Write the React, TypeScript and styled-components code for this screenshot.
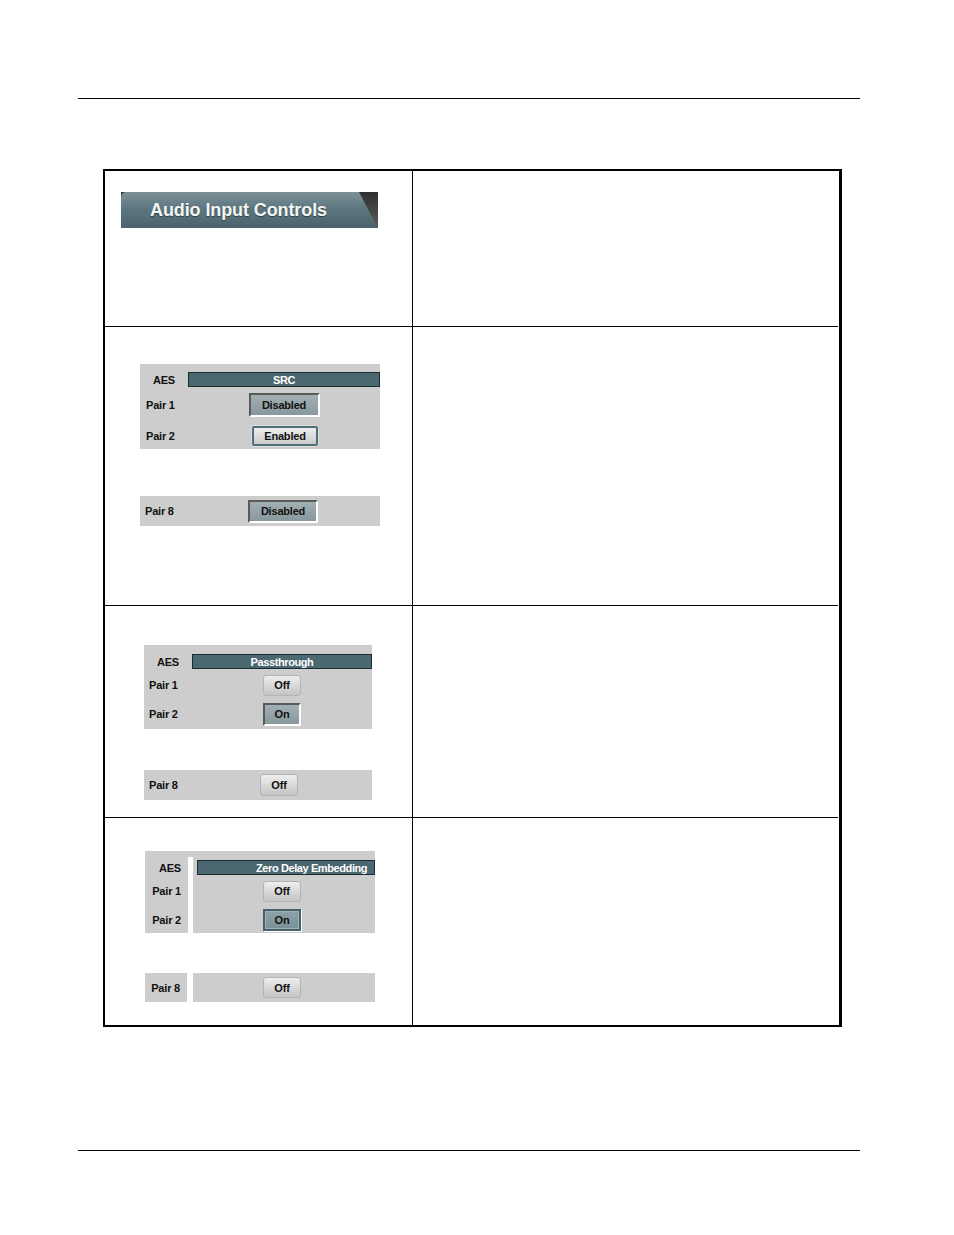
import styled, { createGlobalStyle, css } from "styled-components";

const GlobalStyle = createGlobalStyle`
  html, body {
    margin: 0;
    padding: 0;
    background: #ffffff;
  }
  body {
    font-family: "Liberation Sans", Arial, sans-serif;
  }
`;

const Page = styled.div`
  width: 954px;
  min-height: 1235px;
  padding-top: 98px;
  box-sizing: border-box;
`;

const Rule = styled.div<{ $top: number }>`
  margin: ${({ $top }) => $top}px 0 0 78px;
  width: 782px;
  height: 1px;
  background: #000;
`;

const Table = styled.div`
  margin: 70px 0 0 103px;
  width: 739px;
  box-sizing: border-box;
  border-top: 2px solid #000;
  border-left: 2px solid #000;
  border-right: 3px solid #000;
  border-bottom: 2px solid #000;
  display: grid;
  grid-template-columns: 308px 425px;
`;

const LeftCell = styled.div<{ $h: number; $last?: boolean; $pt: number; $pl: number }>`
  height: ${({ $h }) => $h}px;
  border-right: 1px solid #000;
  border-bottom: ${({ $last }) => ($last ? "none" : "1px solid #000")};
  padding: ${({ $pt, $pl }) => `${$pt}px 0 0 ${$pl}px`};
  box-sizing: content-box;
  display: flex;
  flex-direction: column;
  align-items: flex-start;
`;

const RightCell = styled.div<{ $h: number; $last?: boolean }>`
  height: ${({ $h }) => $h}px;
  border-bottom: ${({ $last }) => ($last ? "none" : "1px solid #000")};
`;

/* ---------- title tab ---------- */

const TabFrame = styled.div`
  width: 257px;
  height: 36px;
  background: linear-gradient(#2f2f2f, #5a5a5a);
`;

const TabFace = styled.div`
  height: 100%;
  box-sizing: border-box;
  padding-left: 29px;
  display: flex;
  align-items: center;
  border-top-left-radius: 5px;
  background: linear-gradient(#7c9198 0%, #5d7780 45%, #4b636b 100%);
  clip-path: polygon(0 0, 238px 0, 257px 100%, 0 100%);
  color: #f4f6f6;
  font-size: 18px;
  font-weight: bold;
  letter-spacing: -0.1px;
  text-shadow: 0 1px 1px rgba(0, 0, 0, 0.45);
`;

/* ---------- control panels ---------- */

const Panel = styled.div<{ $w: number; $pt?: number; $mt?: number }>`
  width: ${({ $w }) => $w}px;
  margin-top: ${({ $mt }) => $mt ?? 0}px;
  padding-top: ${({ $pt }) => $pt ?? 0}px;
  background: #cdcdcd;
  display: flex;
  flex-direction: column;
`;

const Row = styled.div<{ $h: number; $label: number }>`
  height: ${({ $h }) => $h}px;
  display: grid;
  grid-template-columns: ${({ $label }) => $label}px 1fr;
  align-items: center;
`;

const Label = styled.span<{ $center?: boolean; $right?: boolean; $pad?: number }>`
  font-size: 11px;
  font-weight: bold;
  letter-spacing: -0.2px;
  color: #111;
  white-space: nowrap;
  padding-left: ${({ $pad }) => $pad ?? 0}px;
  text-align: ${({ $center, $right }) => ($center ? "center" : $right ? "right" : "left")};
  ${({ $right }) =>
    $right &&
    css`
      padding-right: 7px;
    `}
`;

const HeaderBar = styled.div<{ $pl?: number; $ml?: number }>`
  height: 15px;
  box-sizing: border-box;
  margin-left: ${({ $ml }) => $ml ?? 0}px;
  border: 1px solid #1c2b30;
  background: #4b6770;
  color: #fff;
  font-size: 11px;
  font-weight: bold;
  letter-spacing: -0.4px;
  display: flex;
  align-items: center;
  justify-content: ${({ $pl }) => ($pl ? "flex-start" : "center")};
  padding-left: ${({ $pl }) => $pl ?? 0}px;
  white-space: nowrap;
  overflow: hidden;
`;

const Control = styled.div<{ $dx?: number }>`
  display: flex;
  justify-content: center;
  transform: translateX(${({ $dx }) => $dx ?? 0}px);
`;

type Variant = "pressed" | "raised" | "raisedTeal" | "pressedTeal";

const variants: Record<Variant, ReturnType<typeof css>> = {
  pressed: css`
    border-top: 2px solid #5a5a5a;
    border-left: 2px solid #5a5a5a;
    border-right: 2px solid #fff;
    border-bottom: 2px solid #fff;
    background: linear-gradient(#a2b0b4, #87979c);
  `,
  raised: css`
    border: 1px solid #b4b4b4;
    border-radius: 3px;
    background: linear-gradient(#eeeeee, #c4c4c4);
  `,
  raisedTeal: css`
    border: 2px solid #4e6e78;
    border-radius: 2px;
    background: linear-gradient(#ededed, #cbcbcb);
    box-shadow: 0 0 0 1px #dcdcdc;
  `,
  pressedTeal: css`
    border: 2px solid #45626a;
    background: linear-gradient(#8ea2a8, #789096);
    box-shadow: 1px 1px 0 #fff, inset 0 0 0 1px #9fb2b7;
  `,
};

const Button = styled.div<{ $variant: Variant; $w: number; $h: number }>`
  width: ${({ $w }) => $w}px;
  height: ${({ $h }) => $h}px;
  box-sizing: border-box;
  display: flex;
  align-items: center;
  justify-content: center;
  font-size: 11px;
  font-weight: bold;
  letter-spacing: -0.2px;
  color: #111;
  ${({ $variant }) => variants[$variant]}
`;

/* ---------- split panel (zero delay) ---------- */

const SplitPanel = styled.div`
  width: 230px;
  padding-top: 6px;
  background: #cdcdcd;
  display: flex;
`;

const SplitRow = styled.div<{ $mt?: number }>`
  margin-top: ${({ $mt }) => $mt ?? 0}px;
  display: flex;
  gap: 6px;
`;

const Column = styled.div<{ $w: number; $pt?: number }>`
  width: ${({ $w }) => $w}px;
  padding-top: ${({ $pt }) => $pt ?? 0}px;
  background: #cdcdcd;
  display: flex;
  flex-direction: column;
`;

const StripDivider = styled.div`
  width: 5px;
  background: #ffffff;
`;

const Cell = styled.div<{ $h: number; $right?: boolean }>`
  height: ${({ $h }) => $h}px;
  display: flex;
  align-items: center;
  justify-content: ${({ $right }) => ($right ? "flex-end" : "center")};
`;

export default function App() {
  return (
    <Page>
      <GlobalStyle />
      <Rule $top={0} />
      <Table>
        {/* row 1 */}
        <LeftCell $h={134} $pt={21} $pl={16}>
          <TabFrame>
            <TabFace>Audio Input Controls</TabFace>
          </TabFrame>
        </LeftCell>
        <RightCell $h={155} />

        {/* row 2 */}
        <LeftCell $h={241} $pt={37} $pl={35}>
          <Panel $w={240} $pt={8}>
            <Row $h={15} $label={48}>
              <Label $center>AES</Label>
              <HeaderBar>SRC</HeaderBar>
            </Row>
            <Row $h={36} $label={48}>
              <Label $pad={6}>Pair 1</Label>
              <Control>
                <Button $variant="pressed" $w={71} $h={24}>
                  Disabled
                </Button>
              </Control>
            </Row>
            <Row $h={25} $label={48}>
              <Label $pad={6}>Pair 2</Label>
              <Control $dx={1}>
                <Button $variant="raisedTeal" $w={66} $h={20}>
                  Enabled
                </Button>
              </Control>
            </Row>
            <Row $h={1} $label={48} />
          </Panel>
          <Panel $w={240} $mt={47}>
            <Row $h={30} $label={48}>
              <Label $pad={5}>Pair 8</Label>
              <Control $dx={-1}>
                <Button $variant="pressed" $w={70} $h={23}>
                  Disabled
                </Button>
              </Control>
            </Row>
          </Panel>
        </LeftCell>
        <RightCell $h={278} />

        {/* row 3 */}
        <LeftCell $h={172} $pt={39} $pl={39}>
          <Panel $w={228} $pt={9}>
            <Row $h={15} $label={48}>
              <Label $center>AES</Label>
              <HeaderBar>Passthrough</HeaderBar>
            </Row>
            <Row $h={32} $label={48}>
              <Label $pad={5}>Pair 1</Label>
              <Control>
                <Button $variant="raised" $w={38} $h={21}>
                  Off
                </Button>
              </Control>
            </Row>
            <Row $h={26} $label={48}>
              <Label $pad={5}>Pair 2</Label>
              <Control>
                <Button $variant="pressed" $w={38} $h={23}>
                  On
                </Button>
              </Control>
            </Row>
            <Row $h={2} $label={48} />
          </Panel>
          <Panel $w={228} $mt={41}>
            <Row $h={30} $label={48}>
              <Label $pad={5}>Pair 8</Label>
              <Control $dx={-3}>
                <Button $variant="raised" $w={38} $h={22}>
                  Off
                </Button>
              </Control>
            </Row>
          </Panel>
        </LeftCell>
        <RightCell $h={211} />

        {/* row 4 */}
        <LeftCell $h={174} $pt={33} $pl={40} $last>
          <SplitPanel>
            <Column $w={43} $pt={3}>
              <Cell $h={15} $right>
                <Label $right>AES</Label>
              </Cell>
              <Cell $h={32} $right>
                <Label $right>Pair 1</Label>
              </Cell>
              <Cell $h={26} $right>
                <Label $right>Pair 2</Label>
              </Cell>
            </Column>
            <StripDivider />
            <Column $w={182} $pt={3}>
              <HeaderBar $ml={4} $pl={58}>
                Zero Delay Embedding
              </HeaderBar>
              <Cell $h={32}>
                <Control $dx={-2}>
                  <Button $variant="raised" $w={38} $h={21}>
                    Off
                  </Button>
                </Control>
              </Cell>
              <Cell $h={26}>
                <Control $dx={-2}>
                  <Button $variant="pressedTeal" $w={38} $h={22}>
                    On
                  </Button>
                </Control>
              </Cell>
            </Column>
          </SplitPanel>
          <SplitRow $mt={40}>
            <Column $w={42}>
              <Cell $h={29} $right>
                <Label $right>Pair 8</Label>
              </Cell>
            </Column>
            <Column $w={182}>
              <Cell $h={29}>
                <Control $dx={-2}>
                  <Button $variant="raised" $w={38} $h={21}>
                    Off
                  </Button>
                </Control>
              </Cell>
            </Column>
          </SplitRow>
        </LeftCell>
        <RightCell $h={207} $last />
      </Table>
      <Rule $top={123} />
    </Page>
  );
}
